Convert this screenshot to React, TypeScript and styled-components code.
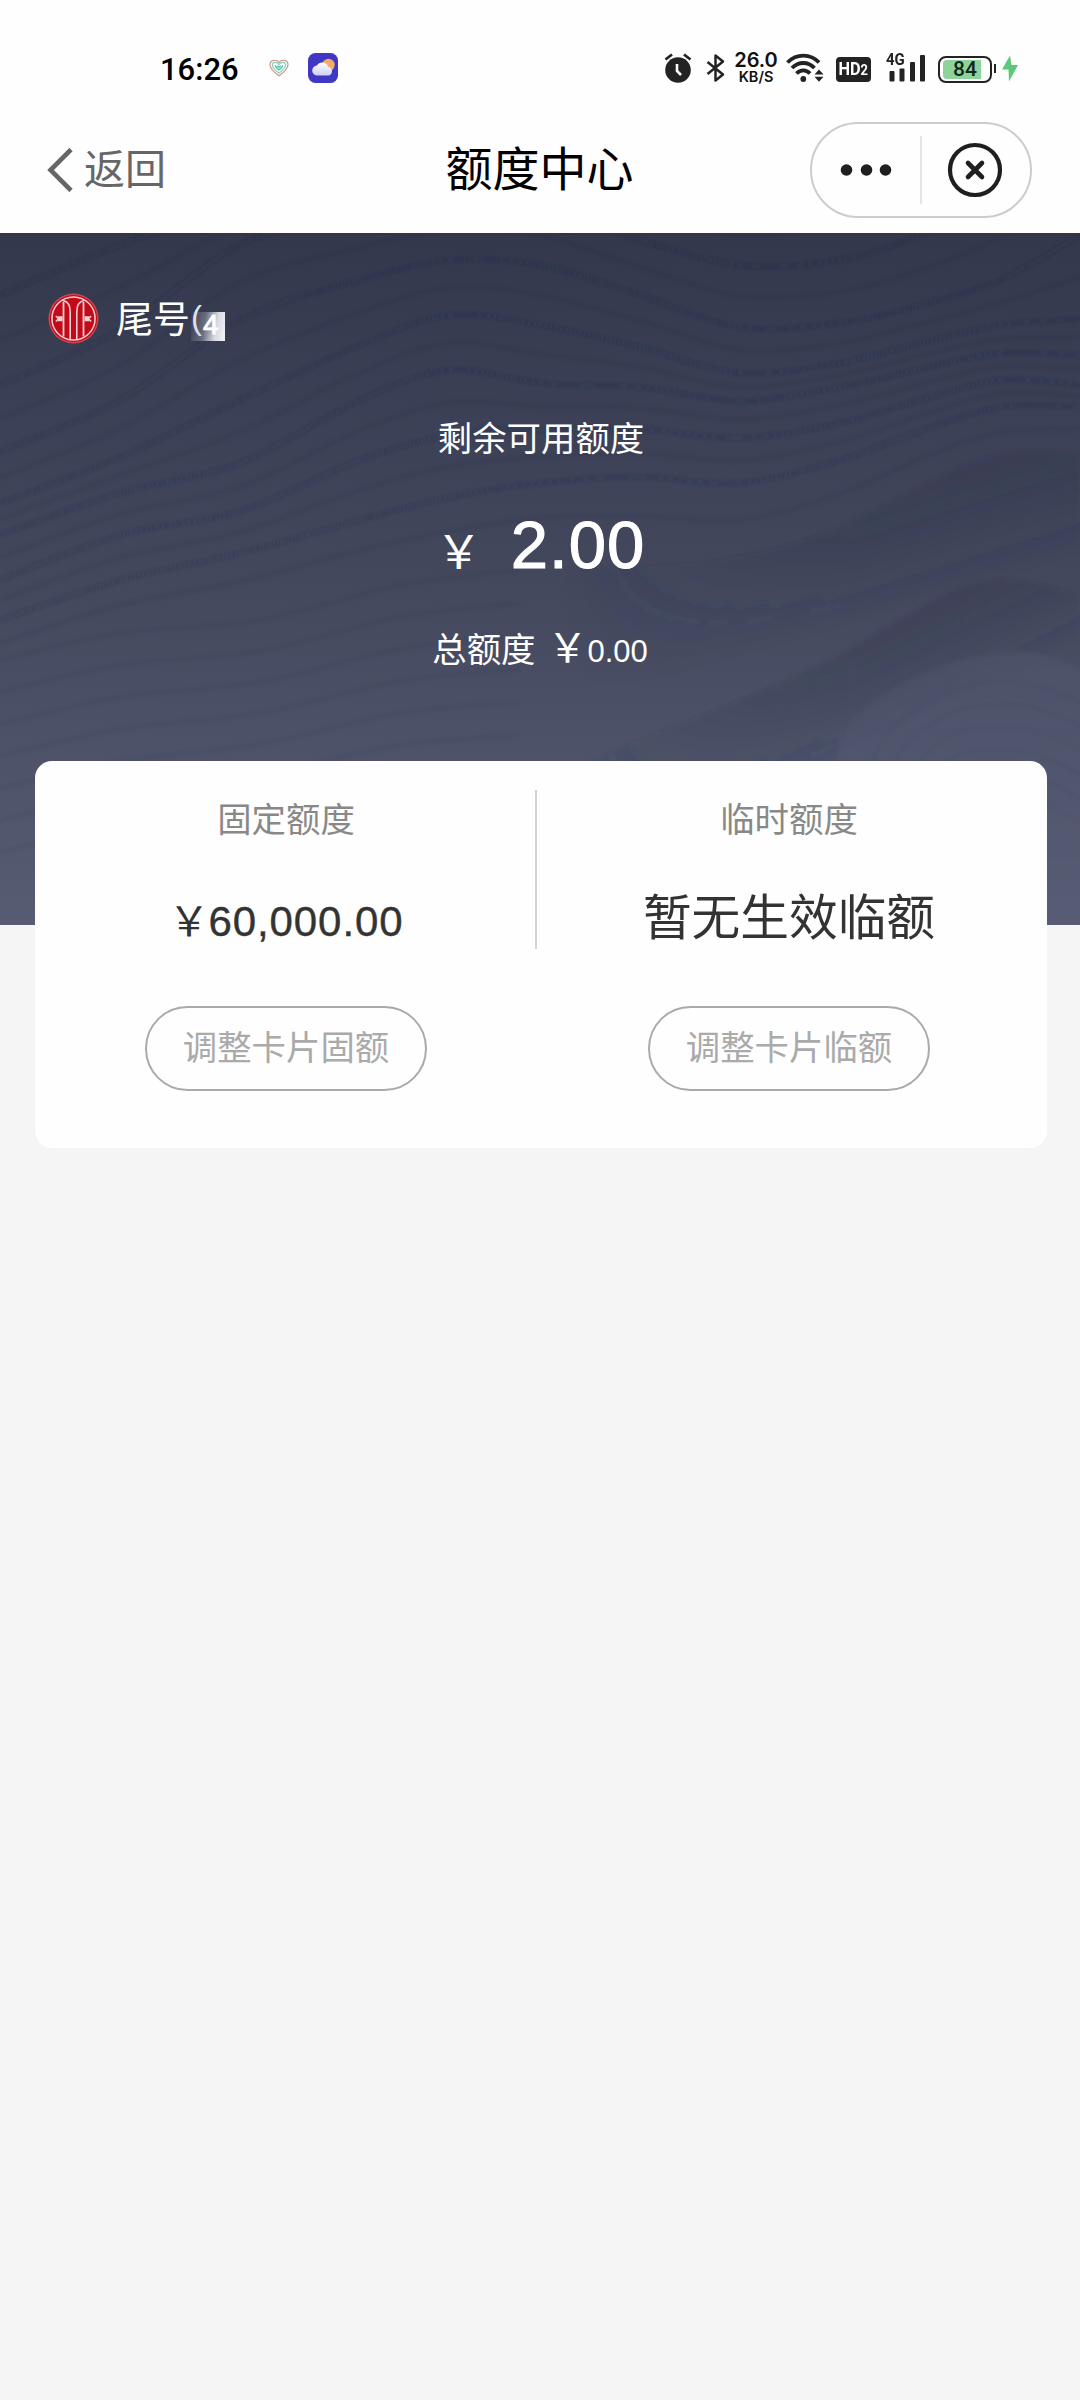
import React from "react";
import styled, { createGlobalStyle } from "styled-components";

const cjk = `"Liberation Sans", "Noto Sans CJK SC", sans-serif`;

const GlobalStyle = createGlobalStyle`
  * { box-sizing: border-box; }
  html, body { margin: 0; padding: 0; background: #f5f5f5; }
  body { font-family: ${cjk}; }
`;

const Page = styled.div`
  width: 1080px;
  min-height: 2400px;
  background: #f5f5f5;
  display: flex;
  flex-direction: column;
`;

/* ---------- status bar ---------- */

const StatusBar = styled.header`
  height: 110px;
  padding: 25px 61px 0 160px;
  background: #fefefe;
  display: flex;
  justify-content: space-between;
`;

const StatusGroup = styled.div`
  height: 86px;
  display: flex;
  align-items: center;
  svg { display: block; flex: none; }
`;

const Clock = styled.span`
  width: 109px;
  font: 500 31px/36px Roboto, sans-serif;
  color: #000;
  margin-top: 3px;
`;

const Gap = styled.span<{ $w: number }>`
  width: ${(p) => p.$w}px;
`;

const Speed = styled.div`
  width: 46px;
  margin: 0 7px 0 7px;
  display: flex;
  flex-direction: column;
  align-items: center;
  color: #111;
  white-space: nowrap;
`;

const SpeedValue = styled.span`
  margin-top: -1px;
  font: 600 20px/17px Inter, sans-serif;
`;

const SpeedUnit = styled.span`
  font: 600 14.5px/15px Inter, sans-serif;
`;

const HdBadge = styled.span`
  width: 35px;
  height: 25px;
  margin-left: 12px;
  border-radius: 4px;
  background: #232323;
  color: #fff;
  display: flex;
  align-items: center;
  justify-content: center;
  transform: translateY(1px);
`;

const HdText = styled.span`
  font: 700 19px/25px Roboto, sans-serif;
  white-space: nowrap;
  transform: scaleX(0.86);
`;

const HdSmall = styled.span`
  font-size: 15px;
`;

const Signal = styled.div`
  position: relative;
  margin-left: 15px;
`;

const SignalLabel = styled.span`
  position: absolute;
  left: 0;
  top: -3px;
  font: 700 17px/17px Roboto, sans-serif;
  transform: scaleX(0.88);
  transform-origin: 0 0;
  color: #232323;
`;

const Battery = styled.div`
  width: 54px;
  height: 27px;
  margin-left: 12px;
  padding: 3px;
  border: 2.5px solid #232323;
  border-radius: 8px;
  background: #fff;
  display: flex;
  position: relative;
  transform: translateY(1px);
  &::after {
    content: "";
    position: absolute;
    right: -6px;
    top: 6px;
    width: 2.5px;
    height: 9px;
    background: #232323;
  }
`;

const BatteryFill = styled.div`
  width: 38px;
  margin: -1px 0;
  border-radius: 4px 0 0 4px;
  background: #8fd39c;
`;

const BatteryText = styled.span`
  position: absolute;
  inset: 0;
  text-align: center;
  font: 500 21px/23px Roboto, sans-serif;
  color: #10281a;
`;

/* ---------- navigation ---------- */

const NavBar = styled.nav`
  height: 123px;
  padding: 0 48px 4px 47px;
  background: #fefefe;
  display: grid;
  grid-template-columns: 1fr auto 1fr;
  align-items: center;
`;

const Back = styled.button`
  border: 0;
  padding: 0;
  background: none;
  display: flex;
  align-items: center;
  gap: 10px;
  font: 400 41px/50px ${cjk};
  color: #666;
  svg { display: block; }
`;

const BackLabel = styled.span`
  margin-top: 1px;
`;

const Title = styled.h1`
  margin: 0;
  font: 400 47px/60px ${cjk};
  color: #000;
`;

const Capsule = styled.div`
  justify-self: end;
  width: 222px;
  height: 96px;
  border: 2px solid #ccc;
  border-radius: 48px;
  display: flex;
  align-items: center;
  svg { display: block; }
`;

const CapsuleHalf = styled.button<{ $w: number }>`
  width: ${(p) => p.$w}px;
  border: 0;
  padding: 0;
  background: none;
  display: flex;
  justify-content: center;
`;

const CapsuleRule = styled.span`
  width: 1.5px;
  height: 68px;
  background: #e4e4e4;
`;

/* ---------- hero ---------- */

const Hero = styled.section`
  position: relative;
  height: 692px;
  background: linear-gradient(180deg, #33384d 0%, #3b4056 25%, #43485d 50%, #4d5269 74%, #575b73 100%);
  border-top: 2px solid #34363f;
`;

const Waves = styled.svg`
  position: absolute;
  left: 0;
  top: 0;
`;

const HeroBody = styled.div`
  position: relative;
  display: flex;
  flex-direction: column;
  color: #fff;
`;

const CardRow = styled.div`
  height: 110px;
  padding: 58px 0 0 48px;
  display: flex;
  align-items: flex-start;
  svg { display: block; }
`;

const CardName = styled.span`
  margin: 1px 0 0 17px;
  font: 400 37px/54px ${cjk};
`;

const Paren = styled.span`
  margin: 1px 0 0 1px;
  font: 400 33px/48px ${cjk};
  color: #dfe3ef;
`;

const Mask = styled.span`
  width: 34px;
  height: 29px;
  margin: 19px 0 0 -11px;
  padding-left: 12px;
  background: linear-gradient(100deg, rgba(200, 203, 214, 0) 0%, rgba(200, 203, 214, 0.35) 40%, #d9dae3 72%, #f4f4f8 100%);
  font: 400 28px/25px ${cjk};
  -webkit-text-stroke: 0.8px #fff;
  color: #fff;
`;

const Label = styled.div`
  margin-top: 69px;
  padding-left: 2px;
  text-align: center;
  font: 400 34.4px/50px ${cjk};
`;

const AmountRow = styled.div`
  height: 90px;
  margin-top: 36px;
  padding-left: 1px;
  display: flex;
  justify-content: center;
  align-items: baseline;
`;

const AmountYen = styled.span`
  font: 400 46px/90px "Noto Sans CJK SC", sans-serif;
  margin-right: 29px;
`;

const Amount = styled.span`
  font: 400 67px/90px ${cjk};
  letter-spacing: 1px;
  -webkit-text-stroke: 1.1px #fff;
`;

const TotalRow = styled.div`
  height: 50px;
  margin-top: 30px;
  display: flex;
  justify-content: center;
  align-items: baseline;
  font: 400 34.4px/50px ${cjk};
`;

const TotalYen = styled.span`
  font: 400 40px/50px "Noto Sans CJK SC", sans-serif;
  margin-left: 12px;
`;

const TotalValue = styled.span`
  font: 400 31px/50px ${cjk};
`;

/* ---------- quota panel ---------- */

const Panel = styled.section`
  position: relative;
  width: 1012px;
  height: 387px;
  margin: -164px 0 0 35px;
  border-radius: 17px;
  background: #fefefe;
  display: flex;
`;

const Rule = styled.span`
  width: 1.5px;
  height: 159px;
  margin-top: 29px;
  background: #d2d2d2;
`;

const Column = styled.div<{ $w: number; $left?: number; $right?: number }>`
  width: ${(p) => p.$w}px;
  padding: 34px ${(p) => p.$right ?? 0}px 0 ${(p) => p.$left ?? 0}px;
  display: flex;
  flex-direction: column;
  align-items: center;
`;

const QuotaLabel = styled.div`
  font: 400 34.4px/50px ${cjk};
  color: #888;
`;

const QuotaValue = styled.div<{ $size: number }>`
  height: 70px;
  margin-top: 38px;
  display: flex;
  align-items: baseline;
  font: 400 ${(p) => p.$size}px/70px ${cjk};
  color: #333;
`;

const QuotaYen = styled.span`
  font: 400 41px/70px "Noto Sans CJK SC", sans-serif;
  margin-right: -1px;
`;

const Digits = styled.span`
  letter-spacing: 0.9px;
  -webkit-text-stroke: 0.4px #333;
`;

const PillButton = styled.button`
  width: 282px;
  height: 85px;
  margin-top: 53px;
  padding: 0 0 1px;
  border: 2px solid #aaa;
  border-radius: 43px;
  background: none;
  font: 400 34.4px/50px ${cjk};
  color: #aaa;
`;

/* ---------- wave artwork ---------- */

type Pt = [number, number];

const xs = [0, 120, 240, 360, 450, 540, 640, 740, 840, 920, 1000, 1080];

const contours: number[][] = [
  [60, 10, -30, -60, -80, -70, -50, -30, -50, -80, -110, -150],
  [150, 95, 10, -20, -35, -30, 5, 30, 25, 0, -40, -90],
  [217, 165, 85, 45, 25, 30, 60, 92, 88, 70, 45, 0],
  [268, 222, 165, 110, 80, 90, 112, 138, 128, 108, 90, 84],
  [300, 258, 228, 165, 135, 148, 152, 166, 152, 134, 118, 120],
  [345, 300, 276, 225, 200, 195, 194, 203, 188, 165, 145, 150],
  [385, 345, 318, 285, 262, 248, 242, 248, 225, 196, 172, 172],
  [432, 395, 375, 345, 330, 318, 320, 322, 292, 252, 222, 216],
];

const smooth = (pts: Pt[]): string => {
  let d = `M${pts[0][0]},${pts[0][1]}`;
  for (let i = 0; i < pts.length - 1; i++) {
    const p0 = pts[Math.max(0, i - 1)];
    const p1 = pts[i];
    const p2 = pts[i + 1];
    const p3 = pts[Math.min(pts.length - 1, i + 2)];
    d += ` C${p1[0] + (p2[0] - p0[0]) / 6},${p1[1] + (p2[1] - p0[1]) / 6} ${p2[0] - (p3[0] - p1[0]) / 6},${p2[1] - (p3[1] - p1[1]) / 6} ${p2[0]},${p2[1]}`;
  }
  return d;
};

const contourPaths: string[] = [];
for (let k = 0; k < contours.length - 1; k++) {
  for (let s = 0; s < 2; s++) {
    const t = s / 2;
    contourPaths.push(
      smooth(xs.map((x, i): Pt => [x, contours[k][i] * (1 - t) + contours[k + 1][i] * t]))
    );
  }
}
const lowerPaths = [0, 1, 2, 3, 4, 5, 6].map((n) =>
  smooth([
    [0, 425 + n * 32],
    [120, 398 + n * 32],
    [260, 385 + n * 31],
    [400, 350 + n * 32],
    [520, 335 + n * 33],
  ])
);

const ridge1 = smooth([[500, 325], [600, 332], [720, 325], [820, 300], [900, 262], [970, 228], [1030, 216], [1090, 222]]);
const ridge2 = smooth([[540, 545], [640, 505], [740, 465], [830, 425], [900, 385], [960, 354], [1020, 345], [1090, 364]]);
const blob = smooth([[838, 560], [842, 505], [870, 470], [920, 440], [985, 420], [1040, 420], [1090, 438]]);

const HeroWaves = () => (
  <Waves width="1080" height="690" viewBox="0 0 1080 690" fill="none">
    <defs>
      <filter id="soft" x="0" y="0" width="1080" height="690" filterUnits="userSpaceOnUse">
        <feGaussianBlur stdDeviation="2" />
      </filter>
      <linearGradient id="shade1" x1="850" y1="250" x2="890" y2="380" gradientUnits="userSpaceOnUse">
        <stop offset="0" stopColor="#2d3148" stopOpacity="0.32" />
        <stop offset="1" stopColor="#2d3148" stopOpacity="0" />
      </linearGradient>
      <linearGradient id="shade2" x1="850" y1="400" x2="900" y2="500" gradientUnits="userSpaceOnUse">
        <stop offset="0" stopColor="#2d3148" stopOpacity="0.32" />
        <stop offset="1" stopColor="#2d3148" stopOpacity="0" />
      </linearGradient>
      <linearGradient id="glow" x1="0" y1="420" x2="0" y2="690" gradientUnits="userSpaceOnUse">
        <stop offset="0" stopColor="#6b7090" stopOpacity="0.14" />
        <stop offset="1" stopColor="#6b7090" stopOpacity="0.04" />
      </linearGradient>
      <linearGradient id="fade" x1="560" y1="0" x2="860" y2="0" gradientUnits="userSpaceOnUse">
        <stop offset="0" stopColor="#000" />
        <stop offset="1" stopColor="#fff" />
      </linearGradient>
      <mask id="fadeIn" x="0" y="0" width="1080" height="690" maskUnits="userSpaceOnUse">
        <rect width="1080" height="690" fill="url(#fade)" />
      </mask>
    </defs>
    <g filter="url(#soft)">
      <g stroke="#242941" strokeWidth="3.500">
        {contourPaths.map((d, i) => (
          <path key={i} d={d} strokeOpacity={i % 2 ? 0.09 : 0.2} />
        ))}
        {lowerPaths.map((d, i) => (
          <path key={i} d={d} strokeOpacity={0.07} />
        ))}
      </g>
      <g mask="url(#fadeIn)">
        <path d={`${ridge1} L1090,600 L500,600 Z`} fill="url(#shade1)" />
        <path d={`${ridge2} L1090,690 L540,690 Z`} fill="url(#shade2)" />
      </g>
      <path d={`${blob} L1090,690 L838,690 Z`} fill="url(#glow)" />
      <g stroke="#30354c" strokeOpacity="0.1" strokeWidth="3.500">
        {[1, 2, 3, 4, 5, 6].map((n) => (
          <path key={n} d={smooth([[845 + n * 14, 540 + n * 18], [880 + n * 12, 475 + n * 19], [960, 431 + n * 22], [1030, 426 + n * 23], [1090, 448 + n * 24]])} />
        ))}
      </g>
    </g>
  </Waves>
);

/* ---------- icons ---------- */

const HeartIcon = () => (
  <svg width="20" height="18" viewBox="0 0 20 18" fill="none">
    <path d="M10 16.8C4 12.6 1 9.600 1 5.800 1 1.200 7 -.4 10 3.400 13 -.4 19 1.200 19 5.800 19 9.600 16 12.600 10 16.800Z" stroke="#c49a86" strokeWidth="1.2" />
    <path d="M10 14C5.800 11 3.400 8.800 3.400 6.200 3.400 3 7.600 2.200 10 5.600 12.400 2.200 16.600 3 16.600 6.200 16.600 8.800 14.200 11 10 14Z" stroke="#8fcdbb" strokeWidth="1.2" />
    <path d="M6.200 6.400C6.800 8.800 8.800 10.200 10 11 11.200 10.200 13.200 8.800 13.800 6.400" stroke="#41c6ae" strokeWidth="1.400" />
    <path d="M8.200 6.600 10 8.400 11.800 6.600" stroke="#41c6ae" strokeWidth="1.300" />
  </svg>
);

const WeatherIcon = () => (
  <svg width="30" height="30" viewBox="0 0 30 30">
    <defs>
      <linearGradient id="cloud" x1="0" y1="0" x2="0" y2="1">
        <stop offset="0" stopColor="#fff" />
        <stop offset="1" stopColor="#cfd0f6" />
      </linearGradient>
    </defs>
    <rect width="30" height="30" rx="7.500" fill="#4038c4" />
    <circle cx="20.500" cy="12" r="6.200" fill="#f3ad62" />
    <path d="M9.500 22.500a5 5 0 0 1-.6-10 6.200 6.200 0 0 1 11.200 1.300 4.500 4.500 0 0 1 .9 8.700Z" fill="url(#cloud)" />
  </svg>
);

const AlarmIcon = () => (
  <svg width="28" height="30" viewBox="0 0 28 30" fill="none">
    <circle cx="14" cy="17" r="12.800" fill="#232323" />
    <path d="M1.500 6.500 8 1.500M20 1.500 26.500 6.500" stroke="#232323" strokeWidth="2.800" />
    <path d="M13 11v7l4 4" stroke="#fff" strokeWidth="2.600" />
  </svg>
);

const BluetoothIcon = () => (
  <svg width="20" height="30" viewBox="0 0 20 30" fill="none">
    <path d="M1.500 9 17 21.500 9.500 27.500V2.500L17 8.500 1.500 21" stroke="#232323" strokeWidth="2.500" strokeLinejoin="round" />
  </svg>
);

const WifiIcon = () => (
  <svg width="38" height="30" viewBox="0 0 38 30" fill="none">
    <path d="M1.500 9.500C10.500.3 24.500.3 33 9.500" stroke="#232323" strokeWidth="3.800" />
    <path d="M6 15C12.500 8.300 22 8.300 28.500 15" stroke="#232323" strokeWidth="3.800" />
    <path d="M10.500 20.500C14.500 16.300 20 16.300 24 20.500" stroke="#232323" strokeWidth="3.800" />
    <circle cx="17.300" cy="26" r="2.900" fill="#232323" />
    <path d="M28.500 21.500 33 16.500 37.500 21.500ZM28.500 23.800h9L33 28.800Z" fill="#232323" />
  </svg>
);

const SignalIcon = () => (
  <svg width="40" height="28" viewBox="0 0 40 28" fill="#232323">
    <rect x="3.500" y="17" width="5" height="10.500" rx="1" />
    <rect x="13.500" y="14.500" width="5" height="13" rx="1" />
    <rect x="24" y="8" width="5" height="19.500" rx="1" />
    <rect x="34" y="1" width="5" height="26.500" rx="1" />
  </svg>
);

const BoltIcon = () => (
  <svg width="18" height="27" viewBox="0 0 18 27">
    <path d="M9 .5 1 14.500h6.500L8 26.500 17 10h-6.500Z" fill="#5cc878" />
  </svg>
);

const ChevronLeft = () => (
  <svg width="27" height="44" viewBox="0 0 27 44" fill="none">
    <path d="M24 1.500 3.500 22 24 42.500" stroke="#666" strokeWidth="4.600" />
  </svg>
);

const BankLogo = () => (
  <svg width="51" height="51" viewBox="0 0 51 51" fill="none">
    <circle cx="25.500" cy="25.500" r="25" fill="#d0434f" />
    <circle cx="25.500" cy="25.500" r="23.600" fill="#c20a19" />
    <circle cx="25.500" cy="25.500" r="21.600" stroke="#f6cdd1" strokeWidth="1.500" />
    <path d="M15 7.500C20 8.500 22.200 13 22.200 19V46.500M36 7.500C31 8.500 28.800 13 28.800 19V46.500" stroke="#f6cdd1" strokeWidth="1.600" />
    <path d="M15.500 9V43.500M35.500 9V43.500" stroke="#f6cdd1" strokeWidth="1.800" />
    <path d="M9.500 23.200h5v5h-5ZM41.500 23.200h-5v5h5Z" fill="#f6cdd1" />
    <path d="M10.500 25.700 7.800 23M10.500 25.700 7.800 28.400M40.500 25.700 43.200 23M40.500 25.700 43.200 28.400" stroke="#f6cdd1" strokeWidth="1.400" />
  </svg>
);

const MoreIcon = () => (
  <svg width="52" height="12" viewBox="0 0 52 12" fill="#1f1f1f">
    <circle cx="6.500" cy="6" r="5.800" />
    <circle cx="26.500" cy="6" r="5.800" />
    <circle cx="45.500" cy="6" r="5.800" />
  </svg>
);

const CloseIcon = () => (
  <svg width="56" height="56" viewBox="0 0 56 56" fill="none">
    <circle cx="28" cy="28" r="25" stroke="#1f1f1f" strokeWidth="4.200" />
    <path d="M21 21 35 35M35 21 21 35" stroke="#1f1f1f" strokeWidth="4.600" strokeLinecap="round" />
  </svg>
);

const YEN = "\uFFE5";

export default function App() {
  return (
    <Page>
      <GlobalStyle />
      <StatusBar>
        <StatusGroup>
          <Clock>16:26</Clock>
          <HeartIcon />
          <Gap $w={19} />
          <WeatherIcon />
        </StatusGroup>
        <StatusGroup>
          <AlarmIcon />
          <Gap $w={14} />
          <BluetoothIcon />
          <Speed>
            <SpeedValue>26.0</SpeedValue>
            <SpeedUnit>KB/S</SpeedUnit>
          </Speed>
          <WifiIcon />
          <HdBadge>
            <HdText>
              HD<HdSmall>2</HdSmall>
            </HdText>
          </HdBadge>
          <Signal>
            <SignalLabel>4G</SignalLabel>
            <SignalIcon />
          </Signal>
          <Battery>
            <BatteryFill />
            <BatteryText>84</BatteryText>
          </Battery>
          <Gap $w={9} />
          <BoltIcon />
        </StatusGroup>
      </StatusBar>

      <NavBar>
        <Back>
          <ChevronLeft />
          <BackLabel>返回</BackLabel>
        </Back>
        <Title>额度中心</Title>
        <Capsule>
          <CapsuleHalf $w={108}>
            <MoreIcon />
          </CapsuleHalf>
          <CapsuleRule />
          <CapsuleHalf $w={107}>
            <CloseIcon />
          </CapsuleHalf>
        </Capsule>
      </NavBar>

      <Hero>
        <HeroWaves />
        <HeroBody>
          <CardRow>
            <BankLogo />
            <CardName>尾号</CardName>
            <Paren>(</Paren>
            <Mask>4</Mask>
          </CardRow>
          <Label>剩余可用额度</Label>
          <AmountRow>
            <AmountYen>{YEN}</AmountYen>
            <Amount>2.00</Amount>
          </AmountRow>
          <TotalRow>
            总额度
            <TotalYen>{YEN}</TotalYen>
            <TotalValue>0.00</TotalValue>
          </TotalRow>
        </HeroBody>
      </Hero>

      <Panel>
        <Column $w={500} $left={2}>
          <QuotaLabel>固定额度</QuotaLabel>
          <QuotaValue $size={42}>
            <QuotaYen>{YEN}</QuotaYen>
            <Digits>60,000.00</Digits>
          </QuotaValue>
          <PillButton>调整卡片固额</PillButton>
        </Column>
        <Rule />
        <Column $w={510} $right={5}>
          <QuotaLabel>临时额度</QuotaLabel>
          <QuotaValue $size={48.7}>暂无生效临额</QuotaValue>
          <PillButton>调整卡片临额</PillButton>
        </Column>
      </Panel>
    </Page>
  );
}
